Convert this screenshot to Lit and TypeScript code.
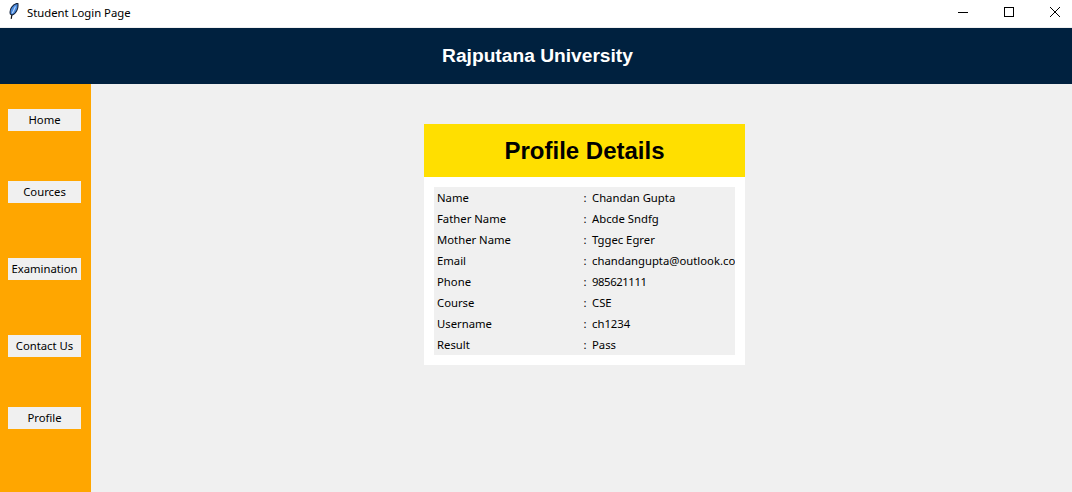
import { LitElement, html, css } from "lit";
import { customElement } from "lit/decorators.js";

const NAV = ["Home", "Cources", "Examination", "Contact Us", "Profile"];
const ROWS: [string, string][] = [
  ["Name", "Chandan Gupta"],
  ["Father Name", "Abcde Sndfg"],
  ["Mother Name", "Tggec Egrer"],
  ["Email", "chandangupta@outlook.com"],
  ["Phone", "985621111"],
  ["Course", "CSE"],
  ["Username", "ch1234"],
  ["Result", "Pass"],
];

@customElement("app-root")
export class AppRoot extends LitElement {
  static styles = css`
    :host {
      display: flex;
      flex-direction: column;
      width: 1072px;
      height: 492px;
      overflow: hidden;
      font-family: "Noto Sans", "Open Sans", sans-serif;
      font-size: 11.3px;
      color: #000;
      background: #f0f0f0;
    }
    .titlebar {
      height: 27px;
      flex: none;
      display: flex;
      align-items: center;
      background: #fff;
      border-bottom: 1px solid #f0f0f0;
    }
    .feather { width: 16px; height: 16px; margin: 0 0 5px 6px; flex: none; }
    .wintitle { margin-left: 5px; font-size: 11.3px; flex: 1; padding-bottom: 3px; }
    .winbtn {
      width: 46px;
      height: 27px;
      flex: none;
      box-sizing: border-box;
      padding: 0 11px 4px 0;
      display: flex;
      align-items: center;
      justify-content: flex-end;
    }
    .winbtn svg { width: 12px; height: 12px; display: block; }
    .header {
      height: 56px;
      flex: none;
      background: #00213f;
      color: #fff;
      display: flex;
      align-items: center;
      justify-content: center;
      font-family: "Liberation Sans", Arial, sans-serif;
      font-weight: 700;
      font-size: 19.2px;
      padding-left: 3px;
    }
    .body { flex: 1; display: flex; min-height: 0; }
    .side {
      width: 91px;
      flex: none;
      background: #ffa600;
      box-sizing: border-box;
      padding: 25px 10px 0 8px;
      display: flex;
      flex-direction: column;
    }
    .navbtn {
      height: 22px;
      flex: none;
      box-sizing: border-box;
      padding-bottom: 2px;
      background: #f0f0f0;
      display: flex;
      align-items: center;
      justify-content: center;
      margin-bottom: 50px;
      white-space: nowrap;
    }
    .navbtn.wide { margin-bottom: 55px; }
    .main { flex: 1; padding: 40px 0 0 333px; }
    .card { width: 321px; height: 241px; background: #fff; display: flex; flex-direction: column; }
    .card-title {
      height: 53px;
      flex: none;
      background: #ffdf00;
      display: flex;
      align-items: center;
      justify-content: center;
      font-family: "Liberation Sans", Arial, sans-serif;
      font-weight: 700;
      font-size: 24px;
    }
    .table {
      margin: 10px;
      height: 168px;
      background: #f0f0f0;
      overflow: hidden;
      display: grid;
      grid-template-rows: repeat(8, 21px);
    }
    .row {
      display: grid;
      grid-template-columns: 149.5px 8.5px auto;
      align-items: center;
      white-space: nowrap;
      line-height: 21px;
    }
    .label { padding-left: 3px; }
    .digits { letter-spacing: -0.4px; }
  `;

  render() {
    return html`
      <div class="titlebar">
        <svg class="feather" viewBox="0 0 16 16">
          <path d="M5.2 15.8 L6 11" stroke="#111" stroke-width="1.2" fill="none" />
          <path d="M4.4 11.2 C3 6.5 6.5 1.2 11.8 .2 C12.6 4.5 10.8 10.5 6.2 12 Z" fill="#4a8ade" stroke="#14233c" stroke-width="1.1" />
          <path d="M6.3 10.2 L9.5 3.5" stroke="#bcd8fb" stroke-width="1.1" fill="none" />
        </svg>
        <div class="wintitle">Student Login Page</div>
        <div class="winbtn"><svg viewBox="0 0 12 12"><path d="M1 6.5H11" stroke="#000" fill="none" /></svg></div>
        <div class="winbtn"><svg viewBox="0 0 12 12"><rect x="1.5" y="1.5" width="9" height="9" stroke="#000" fill="none" /></svg></div>
        <div class="winbtn"><svg viewBox="0 0 12 12"><path d="M1 1L11 11M11 1L1 11" stroke="#000" fill="none" /></svg></div>
      </div>
      <div class="header">Rajputana University</div>
      <div class="body">
        <div class="side">
          ${NAV.map((n, i) => html`<div class="navbtn ${i === 1 || i === 2 ? "wide" : ""}">${n}</div>`)}
        </div>
        <div class="main">
          <div class="card">
            <div class="card-title">Profile Details</div>
            <div class="table">
              ${ROWS.map(
                ([k, v]) => html`<div class="row"><span class="label">${k}</span><span>:</span><span class="${k === "Phone" ? "digits" : ""}">${v}</span></div>`
              )}
            </div>
          </div>
        </div>
      </div>
    `;
  }
}
